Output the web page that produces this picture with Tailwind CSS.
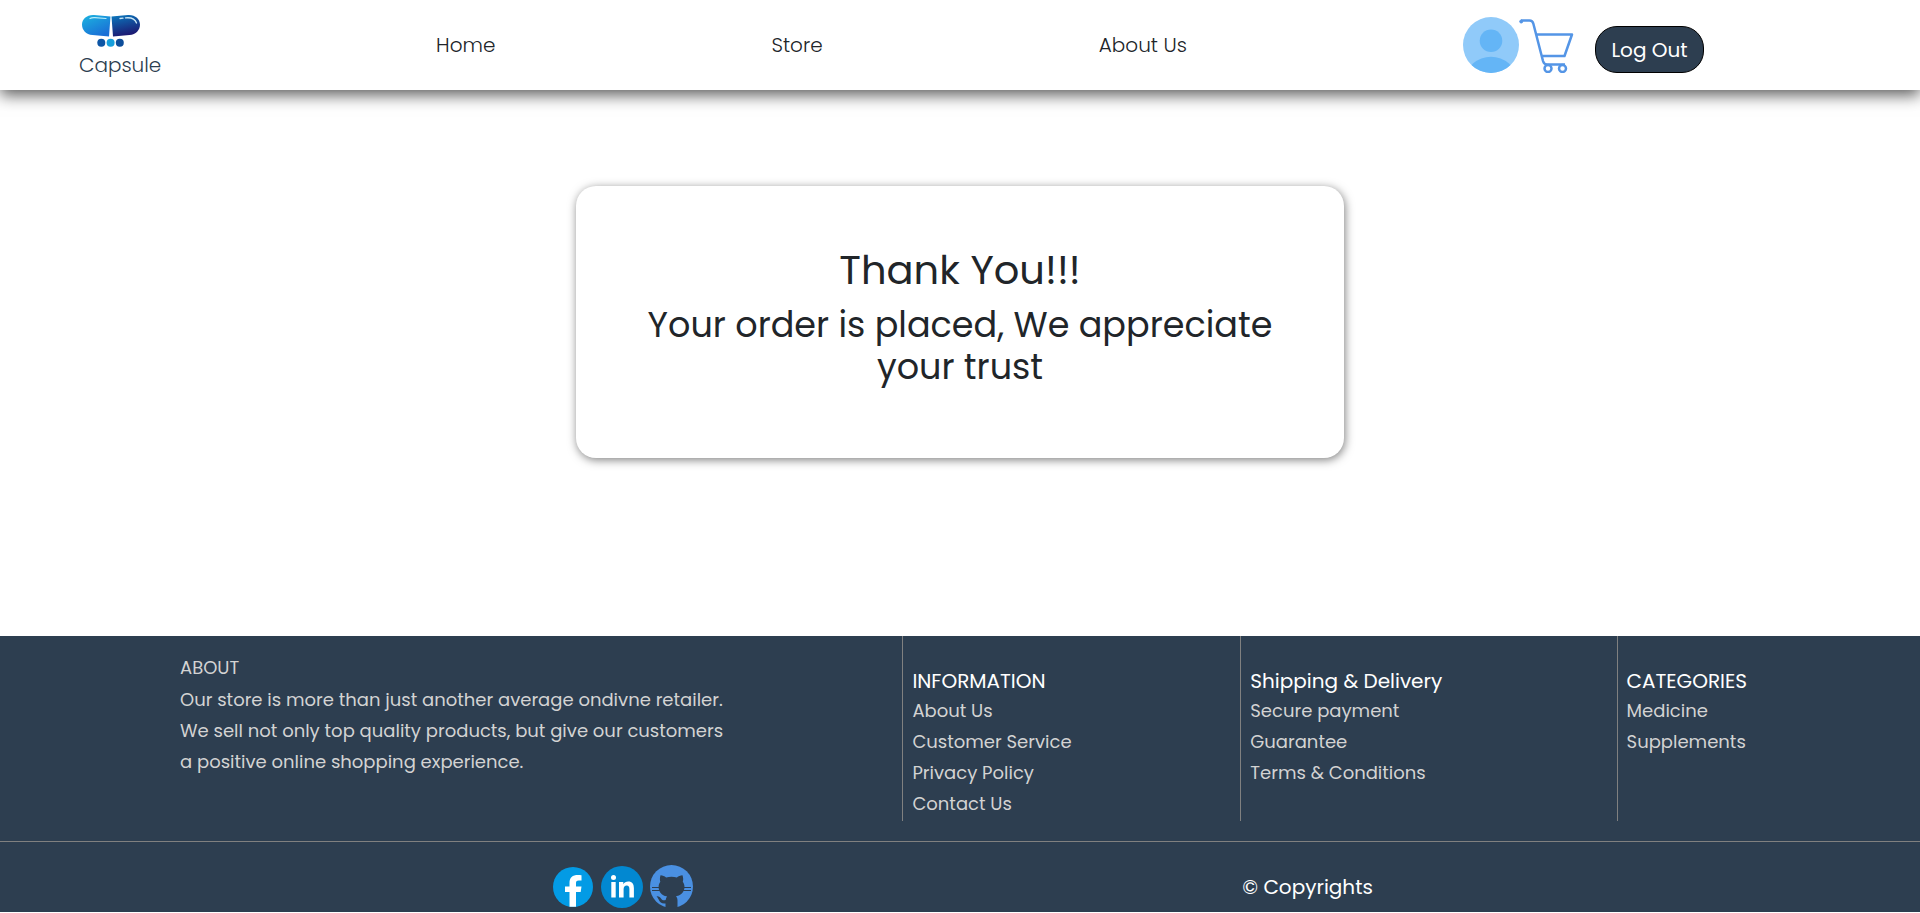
<!DOCTYPE html>
<html lang="en">
<head>
<meta charset="utf-8">
<meta name="viewport" content="width=device-width, initial-scale=1">
<title>Capsule</title>
<script src="https://cdn.jsdelivr.net/npm/@tailwindcss/browser@4"></script>
</head>
<body class="flex min-h-screen flex-col bg-white font-[Poppins,Inter,sans-serif] text-[#212529]">
<header class="flex h-[90px] w-full shrink-0 items-start bg-white text-xl font-light shadow-[0_5px_15px_rgba(0,0,0,0.65)]">
  <a href="#" class="ml-[79px] flex w-[18.6%] flex-col pt-[14px] text-[#2d3e50]">
    <svg class="ml-[3px] h-[34px] w-[58px]" viewBox="0 0 58 34" aria-hidden="true">
      <defs>
        <linearGradient id="capL" x1="0" y1="0" x2="0.6" y2="1"><stop offset="0" stop-color="#1cb5e0"/><stop offset="1" stop-color="#1a6fd6"/></linearGradient>
        <linearGradient id="capR" x1="0" y1="0" x2="0.3" y2="1"><stop offset="0" stop-color="#0a7abf"/><stop offset="1" stop-color="#1c1a73"/></linearGradient>
      </defs>
      <path d="M28.500 2.500 12 1C5 .5 0 5 0 10.500 0 16 4 20.500 10.500 21L27 22.500Z" fill="url(#capL)"/>
      <path d="M29.500 2.500 46 1C53 .5 58 5 58 10.500 58 16 54 20.500 47.500 21L31 22.500Z" fill="url(#capR)"/>
      <path d="M8 4.500Q10 3.300 13 3.600L24 4.500" fill="none" stroke="#b8ecfa" stroke-width="1.200" stroke-linecap="round"/>
      <path d="M38 4.500 41 4.200M43.500 3.900C49 3.300 53 4.500 54.500 9" fill="none" stroke="#c9e6f5" stroke-width="1.300" stroke-linecap="round"/>
      <circle cx="19.300" cy="28.700" r="4" fill="#0d55a5"/><circle cx="28.600" cy="28.700" r="4" fill="#169fdc"/><circle cx="37.800" cy="28.700" r="4" fill="#0d4d9a"/>
    </svg>
    <span class="mt-[2px] leading-[30px]">Capsule</span>
  </a>
  <nav class="flex w-[39.1%] justify-between pt-[30px] leading-[30px]">
    <a href="#">Home</a><a href="#">Store</a><a href="#">About Us</a>
  </nav>
  <div class="ml-auto mr-[216px] flex items-start pt-[17px]">
    <a href="#" aria-label="Profile"><svg class="size-14" viewBox="0 0 56 56" aria-hidden="true"><defs><clipPath id="round"><circle cx="28" cy="28" r="28"/></clipPath></defs><g clip-path="url(#round)"><path fill="#90caf9" d="M0 0h56v56H0z"/><circle cx="28" cy="23.700" r="11.300" fill="#64b5f6"/><ellipse cx="28" cy="62" rx="25" ry="22.300" fill="#64b5f6"/></g></svg></a>
    <a href="#" aria-label="Cart"><svg class="size-14" viewBox="0 0 56 56" fill="none" stroke="#5495e6" stroke-width="2.500" stroke-linejoin="round" aria-hidden="true"><circle cx="2.200" cy="4.500" r="1.500" fill="#5495e6" stroke-width="1"/><path d="M2 3.500H10.500Q13.500 3.500 14.300 6.500L24 44Q25 47.500 28 47.500H46M17.500 17.500H53L45.500 39H23"/><circle cx="29" cy="51.500" r="3.500"/><circle cx="43.500" cy="51.500" r="3.500"/></svg></a>
    <button type="button" class="ml-5 mt-[9px] h-[47px] w-[109px] rounded-[22px] border border-black bg-[#2d3e50] font-normal text-white">Log Out</button>
  </div>
</header>

<main class="flex grow flex-col items-center">
  <section class="mt-24 w-2/5 rounded-[20px] bg-white px-16 pt-[60px] pb-[70px] text-center shadow-[1px_2px_10px_rgba(0,0,0,0.5)]">
    <h1 class="text-[40px] leading-12">Thank You!!!</h1>
    <h2 class="mt-[10px] text-[35px] leading-[42px]">Your order is placed, We appreciate your trust</h2>
  </section>
</main>

<footer class="mt-[177px] mb-px shrink-0 bg-[#2d3e50] text-lg text-[#d3d3d3]">
  <div class="flex h-[185px] leading-[31px]">
    <section class="w-[47%] pl-[180px] pt-4">
      <h2 class="leading-8">ABOUT</h2>
      <p class="max-w-[560px]">Our store is more than just another average ondivne retailer. We sell not only top quality products, but give our customers a positive online shopping experience.</p>
    </section>
    <section class="w-[17.600%] border-l border-[#808080] pl-[9px] pt-[31px]">
      <h2 class="text-xl leading-7 text-white">INFORMATION</h2>
      <ul><li><a href="#">About Us</a></li><li><a href="#">Customer Service</a></li><li><a href="#">Privacy Policy</a></li><li><a href="#">Contact Us</a></li></ul>
    </section>
    <section class="w-[19.600%] border-l border-[#808080] pl-[9px] pt-[31px]">
      <h2 class="text-xl leading-7 text-white">Shipping &amp; Delivery</h2>
      <ul><li><a href="#">Secure payment</a></li><li><a href="#">Guarantee</a></li><li><a href="#">Terms &amp; Conditions</a></li></ul>
    </section>
    <section class="grow border-l border-[#808080] pl-[9px] pt-[31px]">
      <h2 class="text-xl leading-7 text-white">CATEGORIES</h2>
      <ul><li><a href="#">Medicine</a></li><li><a href="#">Supplements</a></li></ul>
    </section>
  </div>
  <div class="mt-5 flex h-[71px] items-start border-t border-[#808080]">
    <div class="flex w-[64.700%] items-center gap-2 pl-[553px] pt-[23px]">
      <a href="#" aria-label="Facebook"><svg class="size-10" viewBox="0 0 40 40" aria-hidden="true"><circle cx="20" cy="20" r="20" fill="#039be5"/><path fill="#fff" d="M16.500 39.800V25H12v-5.500h4.500V16C16.500 10.500 19.500 8 25 8c1.800 0 2.800.2 3.500.3v5.200h-2.800C23.500 13.500 23 14.500 23 16.200v3.300h5.500L27.700 25H23v14.800z"/></svg></a>
      <a href="#" aria-label="LinkedIn"><svg class="size-[42px]" viewBox="0 0 42 42" aria-hidden="true"><circle cx="21" cy="21" r="21" fill="#0288d1"/><circle cx="12.500" cy="11.500" r="2.500" fill="#fff"/><path fill="#fff" d="M10.300 16h4.400v15.500h-4.400zM18 16h4.300v2.200C23.300 16.500 25 15.600 27.200 15.600c4 0 5.700 2.400 5.700 6.700v9.200h-4.500v-8.500c0-2.300-.8-3.500-2.600-3.500-2.100 0-3.200 1.400-3.200 3.700v8.300H18z"/></svg></a>
      <a href="#" aria-label="GitHub" class="-ml-px"><svg class="size-[43px]" viewBox="0 0 43 43" aria-hidden="true"><circle cx="21.500" cy="21.500" r="21.500" fill="#4a90e2"/><g fill="#2d3e50"><path d="M10.500 10.200c2.200 0 4 1 5.600 2.200 3.600-1 7.200-1 10.800 0 1.600-1.200 3.400-2.200 5.600-2.200.8 2.300.9 4.500.3 6.500 1.700 2.300 2 5 1.400 7.600-1 4-4 6.200-8.200 7 1.100 1.200 1.500 2.500 1.500 4.200V44h-12v-5.500c-4 .4-5.500-1.200-6.500-3.200-.6-1.400-1.300-2.500-2.500-4 2.500-.2 3.700 1 4.700 2.500 1.200 1.600 2.400 1.700 4.500 1.200.2-1.700.7-2.800 1.400-3.600-4.200-.8-7.200-3-8.200-7-.6-2.600-.3-5.300 1.400-7.600-.6-2-.5-4.300.2-6.600z"/><path d="M2 22h8v1H2zM2 25h8v1H2zM33 22h8v1h-8zM33 25h8v1h-8z"/></g></svg></a>
    </div>
    <p class="pt-[30px] text-xl leading-[31px] text-white">© Copyrights</p>
  </div>
</footer>
</body>
</html>
